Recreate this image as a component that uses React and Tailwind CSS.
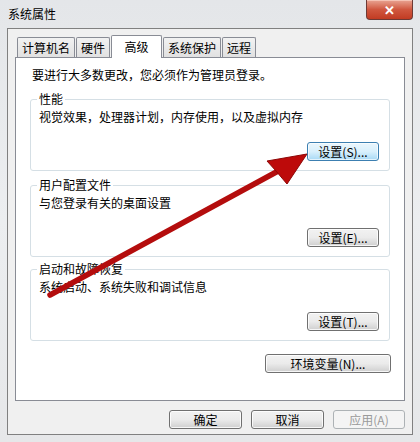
const font = { fontFamily: '"Noto Sans CJK SC", "Noto Sans", sans-serif' };

function Btn({ children, hot, disabled, className = "" }) {
  const base = "h-[19px] flex items-center justify-center rounded-[3px] border text-[12px] leading-none";
  const look = disabled
    ? "border-[#adb2b5] bg-[#f4f4f4] text-[#9a9a9a]"
    : hot
    ? "border-[#3c7fb1] bg-gradient-to-b from-[#eaf6fd] via-[#d9f0fc] to-[#a7d9f5] text-black shadow-[inset_0_0_0_1px_#ffffffaa]"
    : "border-[#707070] bg-gradient-to-b from-[#f2f2f2] via-[#ebebeb] to-[#cfcfcf] text-black shadow-[inset_0_0_0_1px_#ffffffcc]";
  return <div className={`${base} ${look} ${className}`}>{children}</div>;
}

function Group({ title, desc, btn, hot }) {
  return (
    <div className="relative mx-[14px] h-[72px] rounded-[3px] border border-[#d5dfe5] px-[8px]">
      <div className="absolute -top-[9px] left-[6px] bg-white px-[2px] text-[12px] leading-[16px]">{title}</div>
      <div className="pt-[9px] text-[12px] leading-[16px]">{desc}</div>
      <div className="mt-[17px] flex justify-end pr-[2px]">
        <Btn hot={hot} className="w-[72px]">{btn}</Btn>
      </div>
    </div>
  );
}

function Tab({ label, active }) {
  return active ? (
    <div className="relative z-10 -mb-[1px] flex h-[23px] w-[51px] items-start justify-center rounded-t-[2px] border border-b-0 border-[#898c95] bg-white pt-[2px] text-[12px]">
      {label}
    </div>
  ) : (
    <div className="mt-[3px] flex h-[20px] items-center justify-center rounded-t-[2px] border border-b-0 border-[#898c95] bg-gradient-to-b from-[#f2f2f2] to-[#e1e1e1] px-[4px] text-[12px]">
      {label}
    </div>
  );
}

export default function App() {
  return (
    <div style={font} className="relative h-[442px] w-[420px] overflow-hidden bg-gradient-to-b from-[#e4e6e9] via-[#eceef0] to-[#e6e7e9] text-black">
      <div className="flex h-[28px] items-start justify-between pl-[8px] pr-[7px]">
        <div className="pt-[6px] text-[12px] leading-[16px]">系统属性</div>
        <div className="flex h-[20px] w-[47px] items-center justify-center rounded-b-[4px] border border-t-0 border-[#6d3a35] bg-gradient-to-b from-[#e8a493] via-[#d0573f] to-[#c23b22] text-[13px] font-bold text-white shadow-[inset_0_1px_0_#f5c3b5]">
          ✕
        </div>
      </div>
      <div className="mx-[7px] flex h-[407px] flex-col border border-[#808080] bg-[#f0f0f0] px-[7px] pt-[5px]">
        <div className="flex items-end gap-[1px] pl-[2px]">
          <Tab label="计算机名" />
          <Tab label="硬件" />
          <Tab label="高级" active />
          <Tab label="系统保护" />
          <Tab label="远程" />
        </div>
        <div className="flex h-[344px] flex-col border border-[#898c95] bg-white">
          <div className="pl-[16px] pt-[9px] text-[12px] leading-[16px]">要进行大多数更改，您必须作为管理员登录。</div>
          <div className="mt-[16px]">
            <Group title="性能" desc="视觉效果，处理器计划，内存使用，以及虚拟内存" btn="设置(S)..." hot />
          </div>
          <div className="mt-[14px]">
            <Group title="用户配置文件" desc="与您登录有关的桌面设置" btn="设置(E)..." />
          </div>
          <div className="mt-[12px]">
            <Group title="启动和故障恢复" desc="系统启动、系统失败和调试信息" btn="设置(T)..." />
          </div>
          <div className="mt-[13px] flex justify-end pr-[13px]">
            <Btn className="w-[126px]">环境变量(N)...</Btn>
          </div>
        </div>
        <div className="mt-[9px] flex justify-end gap-[9px]">
          <Btn className="w-[73px]">确定</Btn>
          <Btn className="w-[73px]">取消</Btn>
          <Btn disabled className="w-[72px]">应用(A)</Btn>
        </div>
      </div>
      <svg className="pointer-events-none absolute left-0 top-0" width="420" height="442" viewBox="0 0 420 442">
        <line x1="50" y1="295" x2="280" y2="170" stroke="#b40d0d" strokeWidth="5.5" strokeLinecap="round" />
        <polygon points="307,154 267,161 276,171 287,184" fill="#bd0a0a" stroke="#8e0606" strokeWidth="1" strokeLinejoin="round" />
      </svg>
    </div>
  );
}
